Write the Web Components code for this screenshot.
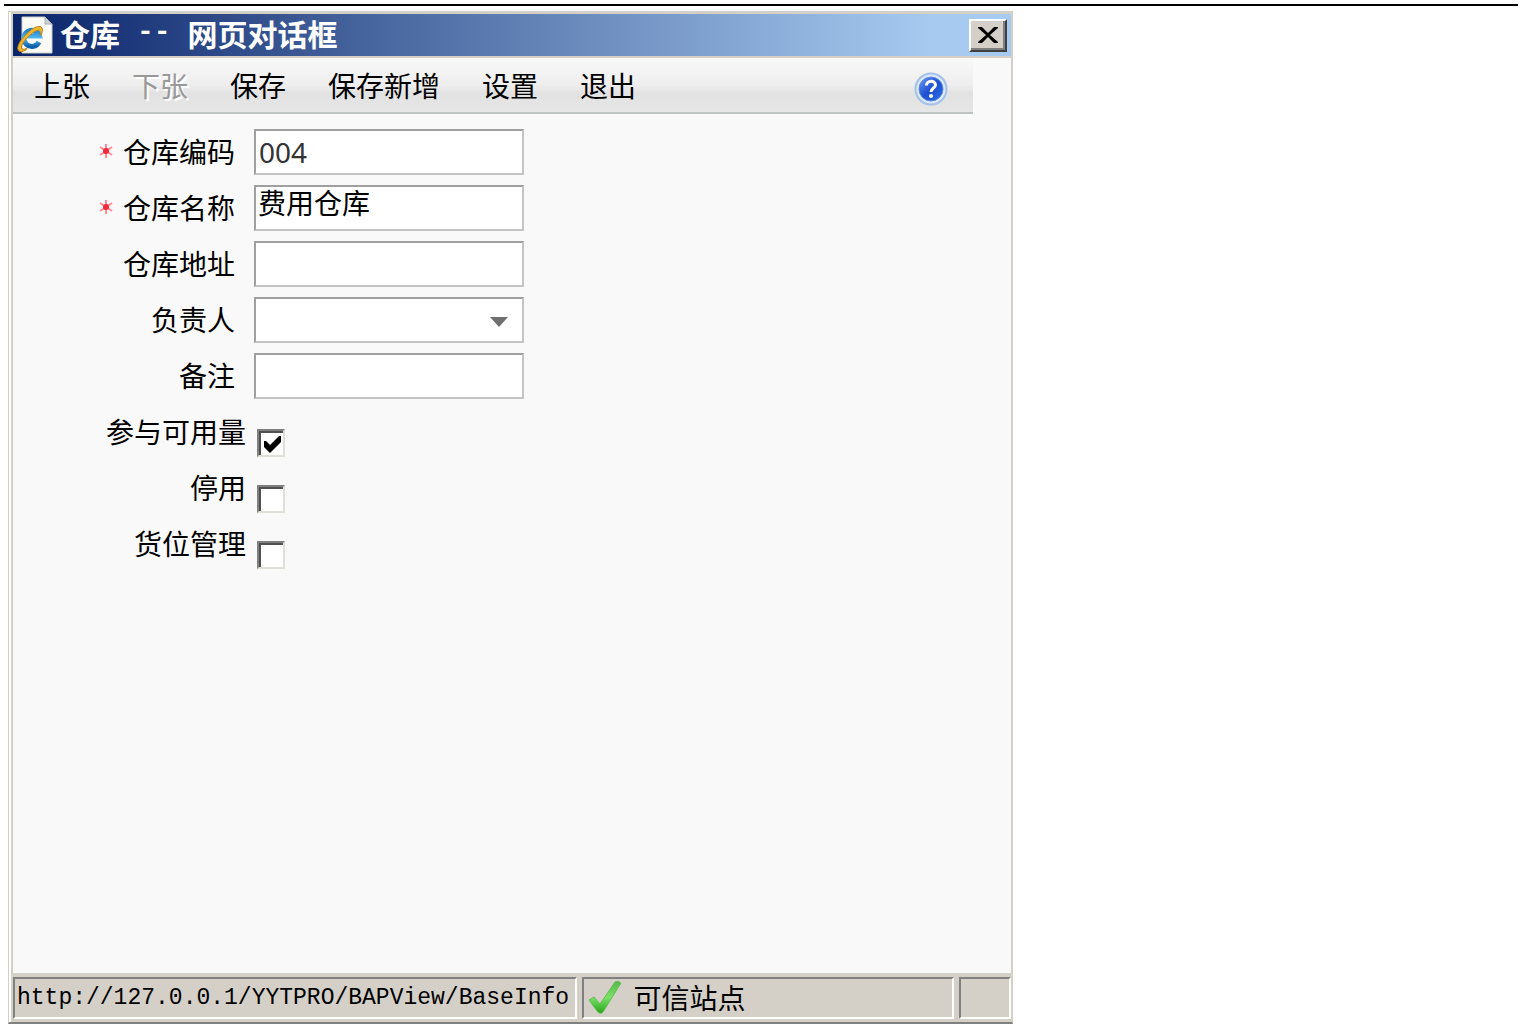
<!DOCTYPE html>
<html lang="zh-CN">
<head>
<meta charset="utf-8">
<title>仓库</title>
<style>
    * {
        box-sizing: border-box;
    }

    body {
        margin: 0;
        padding: 4px 4px 0;
        background: #fff;
        color: #000;
        font: 28px/40px "Noto Sans CJK SC", sans-serif;
    }

    hr {
        margin: 0 0 5px;
        border: 0;
        border-top: 2px solid #000;
    }
</style>
</head>
<body>
<hr>
<web-dialog>
    <title-bar slot="title">
        <span>仓库</span>
        <span class="dash">--</span>
        <span>网页对话框</span>
    </title-bar>
    <tool-bar slot="tools">
        <tool-button>上张</tool-button>
        <tool-button disabled>下张</tool-button>
        <tool-button>保存</tool-button>
        <tool-button>保存新增</tool-button>
        <tool-button>设置</tool-button>
        <tool-button>退出</tool-button>
    </tool-bar>
    <form-field label="仓库编码" value="004" required class="code"></form-field>
    <form-field label="仓库名称" value="费用仓库" required class="name"></form-field>
    <form-field label="仓库地址"></form-field>
    <form-field label="负责人" type="select"></form-field>
    <form-field label="备注"></form-field>
    <check-field label="参与可用量" checked></check-field>
    <check-field label="停用"></check-field>
    <check-field label="货位管理"></check-field>
    <status-bar slot="status">
        <span slot="url">http://127.0.0.1/YYTPRO/BAPView/BaseInfo</span>
        <span slot="zone">可信站点</span>
    </status-bar>
</web-dialog>

<script>
class WebDialog extends HTMLElement {
    constructor() {
        super();
        this.attachShadow({ mode: 'open' });
    }

    connectedCallback() {
        this.shadowRoot.innerHTML = `
        <style>
            :host {
                display: flex;
                flex-direction: column;
                width: 66vw;
                min-height: calc(100vh - 15px);
                margin-left: 4px;
                padding: 2px 1px 2px 4px;
                background: #d4d0c8;
                border: 1px solid #d4d0c8;
                border-bottom: 2px solid #808080;
                box-shadow: inset 2px 0 #fff;
            }

            main {
                flex: 1;
                background: #f9f9f9;
            }

            form {
                padding-top: 15px;
            }
        </style>
        <slot name="title"></slot>
        <main>
            <slot name="tools"></slot>
            <form><slot></slot></form>
        </main>
        <slot name="status"></slot>
        `;
    }
}

class TitleBar extends HTMLElement {
    constructor() {
        super();
        this.attachShadow({ mode: 'open' });
    }

    connectedCallback() {
        this.shadowRoot.innerHTML = `
        <style>
            :host {
                display: flex;
                align-items: center;
                height: 42px;
                margin-bottom: 2px;
                padding: 0 4px;
                background: linear-gradient(to right, #0a246a, #a6caf0 92%);
                color: #fff;
                font-size: 30px;
                font-weight: bold;
            }

            h1 {
                display: flex;
                flex: 1;
                gap: 17px;
                margin: 0 0 5px 7px;
                font: inherit;
                line-height: 40px;
            }

            ::slotted(.dash) {
                font-family: "Liberation Mono", monospace;
                font-size: 28px;
            }

            button {
                display: flex;
                align-items: center;
                justify-content: center;
                width: 38px;
                height: 33px;
                padding: 0;
                background: #d4d0c8;
                border: 2px solid;
                border-color: #fff #404040 #404040 #fff;
                box-shadow: inset -2px -2px #808080;
            }
        </style>
        <svg width="36" height="38" viewBox="0 0 36 38" aria-hidden="true">
            <defs>
                <linearGradient id="e" x1="0" y1="0" x2="0" y2="1">
                    <stop offset="0" stop-color="#1c83cf"/>
                    <stop offset=".5" stop-color="#55bdf0"/>
                    <stop offset="1" stop-color="#0d62ac"/>
                </linearGradient>
            </defs>
            <path d="M5 1H28L35 8V37H5Z" fill="#fbfaf4" stroke="#c9cbc8"/>
            <path d="M28 1V8H35Z" fill="#cdd1d3" stroke="#a9aeb4"/>
            <path d="M22 26A8 8 0 1 1 22.500 20H8" fill="none" stroke="url(#e)" stroke-width="5"/>
            <path d="M9 34C2 38-2 34 3 26S19 8 24 11C27 13 25 18 23 20C25 14 22 13 17 16S2 29 5 33Q7 34 10 32Z" fill="#efb52d" stroke="#bd841c"/>
        </svg>
        <h1><slot></slot></h1>
        <button type="button" aria-label="关闭">
            <svg width="22" height="18" viewBox="0 0 22 18">
                <path d="M1 1H5L11 7L17 1H21V2L13 9L21 16V17H17L11 11L5 17H1V16L9 9L1 2Z"/>
            </svg>
        </button>
        `;
    }
}

class ToolBar extends HTMLElement {
    constructor() {
        super();
        this.attachShadow({ mode: 'open' });
    }

    connectedCallback() {
        this.shadowRoot.innerHTML = `
        <style>
            :host {
                display: flex;
                align-items: center;
                gap: 42px;
                height: 56px;
                margin-right: 38px;
                padding-left: 21px;
                background: linear-gradient(#f8f8f8, #eee 50%, #e2e2e2 65%, #e6e6e6);
                border-bottom: 2px solid #bfc3c1;
            }

            a {
                display: flex;
                margin: 8px 25px 0 auto;
            }
        </style>
        <slot></slot>
        <a href="#help" aria-label="帮助">
            <svg width="34" height="34" viewBox="0 0 34 34">
                <defs>
                    <linearGradient id="q" x1="0" y1="0" x2="1" y2="1">
                        <stop offset="0" stop-color="#6f9df0"/>
                        <stop offset=".5" stop-color="#1c4fd2"/>
                        <stop offset="1" stop-color="#2f6fe6"/>
                    </linearGradient>
                </defs>
                <circle cx="17" cy="17" r="15.500" fill="#dce9fa" stroke="#a3c1e8" stroke-width="2"/>
                <circle cx="17" cy="17" r="12" fill="url(#q)" stroke="#5c88dc"/>
                <path d="M12.500 13.500C12.500 8 21.500 8 21.500 13C21.500 16 17 16 17 20" fill="none" stroke="#fff" stroke-width="3"/>
                <circle cx="17" cy="24" r="2" fill="#fff"/>
            </svg>
        </a>
        `;
    }
}

class ToolButton extends HTMLElement {
    constructor() {
        super();
        this.attachShadow({ mode: 'open' });
    }

    connectedCallback() {
        this.shadowRoot.innerHTML = `
        <style>
            :host {
                display: block;
            }

            button {
                display: block;
                padding: 0;
                background: none;
                border: 0;
                color: #000;
                font: inherit;
            }

            button:disabled {
                color: #999;
                text-shadow: 2px 2px #fff;
            }
        </style>
        <button type="button" ${this.hasAttribute('disabled') ? 'disabled' : ''}><slot></slot></button>
        `;
    }
}

class FormField extends HTMLElement {
    constructor() {
        super();
        this.attachShadow({ mode: 'open' });
    }

    connectedCallback() {
        const label = this.getAttribute('label');
        const value = this.getAttribute('value') || '';
        const isSelect = this.getAttribute('type') === 'select';
        const control = isSelect
            ? `<select id="field"><option></option></select>
               <svg width="18" height="10" viewBox="0 0 18 10"><path d="M0 0H18L9 10Z" fill="#707070"/></svg>`
            : `<input id="field" type="text" value="${value}">`;

        this.shadowRoot.innerHTML = `
        <style>
            :host {
                display: flex;
                align-items: center;
                height: 46px;
                margin-bottom: 10px;
            }

            label {
                display: flex;
                align-items: center;
                justify-content: flex-end;
                gap: 10px;
                width: 222px;
                margin-right: 19px;
                line-height: 36px;
                padding-bottom: 2px;
            }

            .box {
                display: flex;
                position: relative;
                width: 270px;
                height: 46px;
            }

            input, select {
                box-sizing: border-box;
                width: 100%;
                padding: 0 3px;
                background: #fff;
                border: 2px solid;
                border-color: #a0a0a0 #c4c4c4 #c4c4c4 #a0a0a0;
                border-radius: 0;
                color: #000;
                font: inherit;
                appearance: none;
            }

            :host(.code) input {
                color: #333;
                font-family: "Noto Sans", sans-serif;
            }

            :host(.name) input {
                padding: 0 2px 12px;
            }

            .box svg {
                position: absolute;
                right: 16px;
                top: 20px;
                pointer-events: none;
            }
        </style>
        <label for="field">
            ${this.hasAttribute('required') ? `
            <svg width="14" height="14" viewBox="0 0 14 14" aria-hidden="true">
                <path d="M7 0V14M1 3L13 11M13 3L1 11" stroke="#ff8c90" stroke-width="2"/>
                <circle cx="7" cy="7" r="3" fill="#f0283c"/>
            </svg>` : ''}
            <span>${label}</span>
        </label>
        <div class="box">${control}</div>
        `;
    }
}

class CheckField extends HTMLElement {
    constructor() {
        super();
        this.attachShadow({ mode: 'open' });
    }

    connectedCallback() {
        this.shadowRoot.innerHTML = `
        <style>
            :host {
                display: flex;
                align-items: flex-start;
                height: 56px;
            }

            label {
                width: 233px;
                margin: 2px 11px 0 0;
                text-align: right;
            }

            .box {
                display: grid;
                place-items: center;
                margin-top: 20px;
            }

            input, svg {
                grid-area: 1 / 1;
            }

            input {
                box-sizing: border-box;
                width: 28px;
                height: 28px;
                margin: 0;
                background: #fff;
                border: 2px solid;
                border-color: #808080 #e0ded8 #e0ded8 #808080;
                box-shadow: inset 2px 2px #505050;
                appearance: none;
            }

            svg {
                display: none;
                z-index: 1;
                pointer-events: none;
            }

            input:checked + svg {
                display: block;
            }
        </style>
        <label for="check">${this.getAttribute('label')}</label>
        <div class="box">
            <input id="check" type="checkbox" ${this.hasAttribute('checked') ? 'checked' : ''}>
            <svg width="28" height="28" viewBox="0 0 28 28">
                <path d="M7 12H9L13 16L22 7H24V13L13 24L7 18Z"/>
            </svg>
        </div>
        `;
    }
}

class StatusBar extends HTMLElement {
    constructor() {
        super();
        this.attachShadow({ mode: 'open' });
    }

    connectedCallback() {
        this.shadowRoot.innerHTML = `
        <style>
            :host {
                display: flex;
                gap: 5px;
                height: 47px;
                padding: 4px 0 1px;
            }

            div {
                box-sizing: border-box;
                display: flex;
                align-items: center;
                min-width: 0;
                overflow: hidden;
                border: 2px solid;
                border-color: #808080 #fff #fff #808080;
                white-space: nowrap;
            }

            .url {
                flex: 566 1 0;
                padding-left: 2px;
                font-family: "Liberation Mono", monospace;
                font-size: 23px;
            }

            .zone {
                flex: 368 1 0;
                gap: 11px;
                padding: 0 0 3px 4px;
            }

            .grip {
                flex: none;
                width: 52px;
            }
        </style>
        <div class="url"><slot name="url"></slot></div>
        <div class="zone">
            <svg width="34" height="34" viewBox="0 0 34 34" aria-hidden="true">
                <defs>
                    <linearGradient id="ok" x1="0" y1="0" x2="0" y2="1">
                        <stop offset="0" stop-color="#55b54b"/>
                        <stop offset=".5" stop-color="#7ae265"/>
                        <stop offset="1" stop-color="#27a51c"/>
                    </linearGradient>
                </defs>
                <path d="M1 20L6 17L12 24L27 2Q30 0 33 3L15 32Q12 35 9 31Z" fill="url(#ok)" stroke="#65bd55"/>
            </svg>
            <slot name="zone"></slot>
        </div>
        <div class="grip"></div>
        `;
    }
}

customElements.define('web-dialog', WebDialog);
customElements.define('title-bar', TitleBar);
customElements.define('tool-bar', ToolBar);
customElements.define('tool-button', ToolButton);
customElements.define('form-field', FormField);
customElements.define('check-field', CheckField);
customElements.define('status-bar', StatusBar);
</script>
</body>
</html>
